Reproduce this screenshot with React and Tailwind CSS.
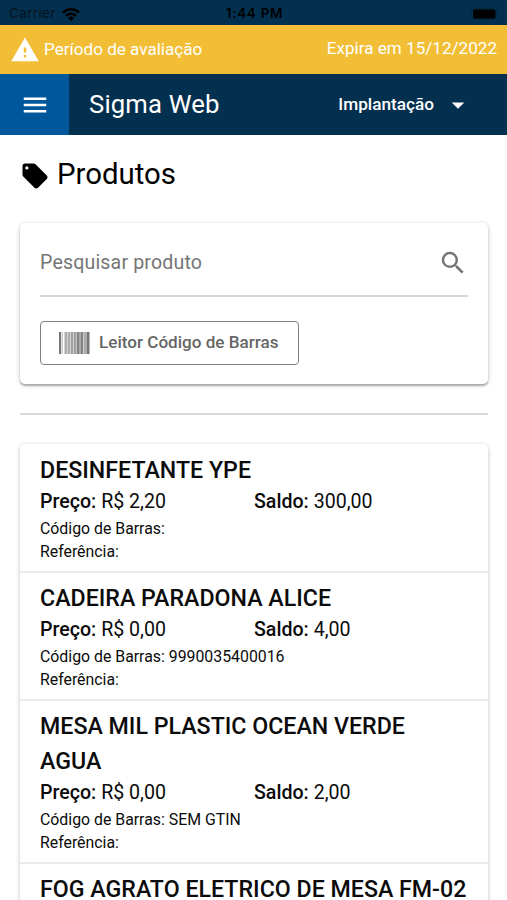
import React from 'react';
import { MdWarning, MdMenu, MdSearch, MdArrowDropDown } from 'react-icons/md';

const products = [
    { name: 'DESINFETANTE YPE', price: 'R$ 2,20', stock: '300,00', barcode: '' },
    { name: 'CADEIRA PARADONA ALICE', price: 'R$ 0,00', stock: '4,00', barcode: '9990035400016' },
    { name: 'MESA MIL PLASTIC OCEAN VERDE AGUA', price: 'R$ 0,00', stock: '2,00', barcode: 'SEM GTIN' },
    { name: 'FOG AGRATO ELETRICO DE MESA FM-02' },
];

const StatusBar = () => (
    <div className="grid h-[25px] grid-cols-3 items-center bg-[#03304f] pt-[3px] pl-[9px] pr-[7px] font-['Inter',sans-serif] text-black">
        <div className="flex items-center gap-[6px] text-[13.5px] leading-none tracking-[0.35px] text-[#03131f]">
            Carrier
            <svg width="18" height="13" viewBox="0 0 18 13" fill="none" stroke="#000" strokeWidth="2.5">
                <path d="M1 4.6a11.4 11.4 0 0 1 16 0" />
                <path d="M4 7.8a7.2 7.2 0 0 1 10 0" />
                <path d="M9 13 5.9 9.9a4.4 4.4 0 0 1 6.2 0z" fill="#000" stroke="none" />
            </svg>
        </div>
        <div className="text-center text-[13.5px] leading-none font-semibold tracking-[0.7px]">1:44 PM</div>
        <div className="flex justify-end">
            <svg width="29" height="12" viewBox="0 0 29 12">
                <rect x=".5" y=".5" width="25.5" height="11" rx="3" fill="none" stroke="#032740" />
                <rect x="2" y="1.5" width="22.5" height="9" rx="1.8" />
                <path d="M27.3 4v4c1.2-.6 1.2-3.4 0-4" fill="#032740" />
            </svg>
        </div>
    </div>
);

const TrialBanner = () => (
    <div className="flex h-[49px] items-center justify-between bg-[#f1be36] px-[10px] text-[17.1px] text-white">
        <div className="flex items-center gap-[4px]">
            <MdWarning className="size-[30px]" />
            <span>Período de avaliação</span>
        </div>
        <span className="pb-[2px]">Expira em 15/12/2022</span>
    </div>
);

const Header = () => (
    <header className="flex h-[61px] items-center bg-[#03304f] text-white">
        <button className="flex h-full w-[69px] items-center justify-center bg-[#01579b]">
            <MdMenu className="size-[30px]" />
        </button>
        <h1 className="ml-[20px] text-[25.7px] tracking-[0.15px]">Sigma Web</h1>
        <button className="mr-[34px] ml-auto flex items-center gap-[9px] text-[17.2px] font-medium">
            Implantação
            <MdArrowDropDown className="size-[30px]" />
        </button>
    </header>
);

const Barcode = () => (
    <svg width="31" height="22" viewBox="0 0 31 22" fill="#777">
        <rect x="0" width="2" height="22" />
        <rect x="2.5" width="1.5" height="22" opacity=".4" />
        <rect x="5.5" width="3" height="22" opacity=".6" />
        <rect x="9" width="2.5" height="22" opacity=".6" />
        <rect x="12" width="2.5" height="22" opacity=".7" />
        <rect x="15" width="2.3" height="22" opacity=".7" />
        <rect x="17.7" width="3" height="22" opacity=".9" />
        <rect x="21.3" width="3" height="22" opacity=".9" />
        <rect x="24.8" width="2.5" height="22" opacity=".6" />
        <rect x="27.5" width="3" height="22" />
    </svg>
);

const SearchCard = () => (
    <section className="h-[161px] rounded-[5px] bg-white px-[20px] shadow-[0_1px_5px_rgba(0,0,0,0.2),0_2px_2px_rgba(0,0,0,0.14),0_2px_1px_rgba(0,0,0,0.12)]">
        <div className="flex h-[74px] items-center justify-between border-b-2 border-[#d5d6d6] pt-[7px] text-[#757575]">
            <span className="text-[19.6px] tracking-[0.15px]">Pesquisar produto</span>
            <MdSearch className="size-[30px]" />
        </div>
        <button className="mt-[24px] flex h-[44px] w-[259px] items-center gap-[9px] rounded-[4px] border-[1.5px] border-[#808080] pl-[18px] text-[17.1px] font-medium text-[#666]">
            <Barcode />
            Leitor Código de Barras
        </button>
    </section>
);

const ProductItem = ({ product }) => (
    <li className="border-b-2 border-[#ebebeb] px-[20px] pt-[8px] pb-[8px]">
        <h3 className="text-[23.2px] leading-[34.2px] font-medium">{product.name}</h3>
        {product.price && (
            <>
                <div className="grid grid-cols-2 text-[19.6px] leading-[30px]">
                    <div><span className="font-medium">Preço:</span> {product.price}</div>
                    <div><span className="font-medium">Saldo:</span> {product.stock}</div>
                </div>
                <p className="text-[15.85px] leading-[23px]">Código de Barras: {product.barcode}</p>
                <p className="text-[15.85px] leading-[23px]">Referência:</p>
            </>
        )}
    </li>
);

const App = () => {
    return (
        <div className="h-[900px] w-full overflow-hidden bg-white font-['Roboto',sans-serif] text-[#0b0b0b]">
            <StatusBar />
            <TrialBanner />
            <Header />
            <main className="pr-[19px] pl-[20px]">
                <div className="flex h-[88px] items-center gap-[7px] pb-[9px] text-black">
                    <svg className="mt-[3px] size-[30px]" viewBox="0 0 24 24" fill="currentColor">
                        <path d="M5.5 6.8a1.3 1.3 0 1 1 0-2.6 1.3 1.3 0 0 1 0 2.6m15.91 4.78-9-9A2 2 0 0 0 11 2H4a2 2 0 0 0-2 2v7c0 .55.22 1.05.59 1.41l8.99 9c.37.36.87.59 1.42.59s1.05-.23 1.41-.59l7-7c.37-.36.59-.86.59-1.41 0-.56-.23-1.06-.59-1.42" />
                    </svg>
                    <h2 className="text-[29.4px]">Produtos</h2>
                </div>
                <SearchCard />
                <hr className="mt-[29px] mb-[29px] border-t-2 border-[#d9d9d9]" />
                <ul className="rounded-[5px] bg-white pt-px shadow-[0_1px_5px_rgba(0,0,0,0.2),0_2px_2px_rgba(0,0,0,0.1)]">
                    {products.map((product) => (
                        <ProductItem key={product.name} product={product} />
                    ))}
                </ul>
            </main>
        </div>
    );
};

export default App;
